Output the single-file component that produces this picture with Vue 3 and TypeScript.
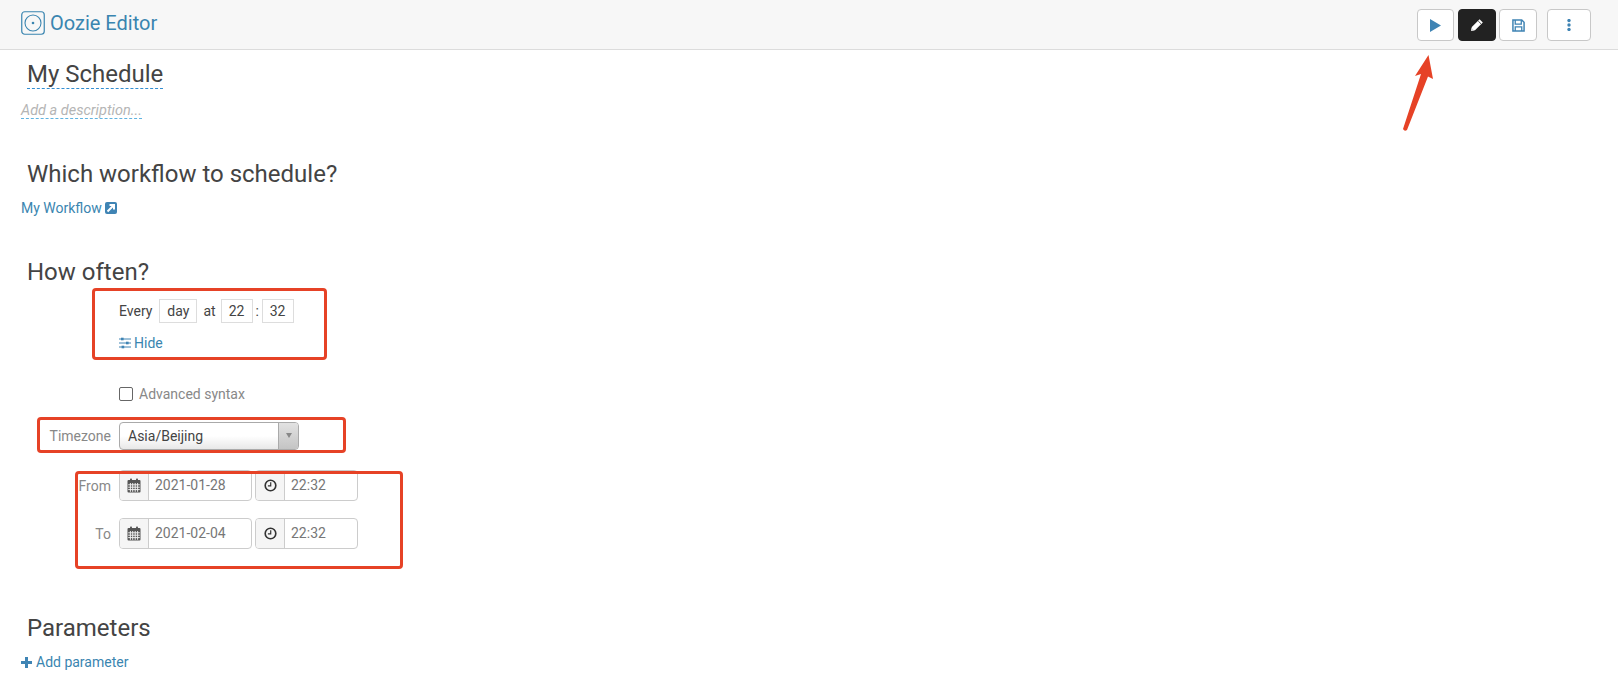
<script setup lang="ts">
const dates = [
  { label: 'From', date: '2021-01-28', time: '22:32' },
  { label: 'To', date: '2021-02-04', time: '22:32' },
]
</script>

<template>
  <div class="page">
    <header class="bar">
      <a class="brand">
        <svg class="brand-icon" viewBox="0 0 24 24" width="24" height="24">
          <rect x="0.75" y="0.75" width="22.5" height="22.5" rx="3" fill="none" stroke="#3a85b0" stroke-width="1.2" />
          <circle cx="12" cy="12" r="8" fill="none" stroke="#3a85b0" stroke-width="1.1" />
          <circle cx="12" cy="12" r="1.3" fill="#3a85b0" />
        </svg>
        <span>Oozie Editor</span>
      </a>
      <div class="actions">
        <button class="btn play">
          <svg viewBox="0 0 11 13" width="11" height="13"><path d="M0 0 L11 6.5 L0 13 Z" fill="#3f84b4" /></svg>
        </button>
        <button class="btn edit">
          <svg viewBox="0 0 14 14" width="14" height="14"><path d="M9.6 1.2 L12.8 4.4 L5 12.2 L1 13 L1.8 9 Z" fill="#fff" /><path d="M8.2 3 L11 5.8" stroke="#222" stroke-width="0.8" /><path d="M1.5 10 L4 12.5 L1 13 Z" fill="#ccc" /></svg>
        </button>
        <button class="btn save">
          <svg viewBox="0 0 14 14" width="13" height="13"><path d="M1 1 H10.5 L13 3.5 V13 H1 Z" fill="none" stroke="#3f84b4" stroke-width="1.6" /><path d="M3.5 1 V5.5 H10 V1 M3.5 13 V8.5 H10.5 V13" fill="none" stroke="#3f84b4" stroke-width="1.4" /></svg>
        </button>
        <button class="btn more">
          <svg viewBox="0 0 4 12" width="4" height="12"><circle cx="2" cy="1.6" r="1.7" fill="#3f84b4" /><circle cx="2" cy="6" r="1.7" fill="#3f84b4" /><circle cx="2" cy="10.4" r="1.7" fill="#3f84b4" /></svg>
        </button>
      </div>
    </header>

    <main class="content">
      <h2 class="heading title"><span class="editable">My Schedule</span></h2>
      <p class="description"><span>Add a description...</span></p>

      <h2 class="heading workflow-title">Which workflow to schedule?</h2>
      <a class="link workflow-link">
        My Workflow
        <svg viewBox="0 0 12 12" width="12" height="12"><rect width="12" height="12" rx="2" fill="#3f84b4" /><path d="M2.5 9.5 L8 4 M4.5 3 H9 V7.5" stroke="#fff" stroke-width="2" fill="none" /></svg>
      </a>

      <h2 class="heading often-title">How often?</h2>
      <div class="cron">
        <div class="cron-row">
          <span>Every</span>
          <span class="chip day">day</span>
          <span class="at">at</span>
          <span class="chip num">22</span>
          <span class="colon">:</span>
          <span class="chip num">32</span>
        </div>
        <a class="link hide">
          <svg viewBox="0 0 12 12" width="12" height="12">
            <path d="M0 2 H12 M0 6 H12 M0 10 H12" stroke="#3f84b4" stroke-width="1" />
            <rect x="2" y="0.7" width="2.6" height="2.6" fill="#3f84b4" />
            <rect x="7" y="4.7" width="2.6" height="2.6" fill="#3f84b4" />
            <rect x="2.6" y="8.7" width="2.6" height="2.6" fill="#3f84b4" />
          </svg>
          Hide
        </a>
      </div>

      <label class="advanced">
        <span class="checkbox"></span>
        <span>Advanced syntax</span>
      </label>

      <div class="form-row timezone">
        <span class="form-label">Timezone</span>
        <div class="select">
          <span class="select-value">Asia/Beijing</span>
          <span class="select-arrow"><i></i></span>
        </div>
      </div>

      <div v-for="d in dates" :key="d.label" class="form-row date-row">
        <span class="form-label">{{ d.label }}</span>
        <div class="input-group date">
          <span class="addon">
            <svg viewBox="0 0 14 15" width="14" height="15">
              <rect x="0.5" y="2" width="13" height="12.5" rx="1" fill="#555" />
              <rect x="3" y="0.5" width="2" height="3" rx="0.8" fill="#555" />
              <rect x="9" y="0.5" width="2" height="3" rx="0.8" fill="#555" />
              <path d="M1.2 6.8 H12.8 M1.2 9.2 H12.8 M1.2 11.6 H12.8 M3.4 5 V13.8 M5.7 5 V13.8 M8.2 5 V13.8 M10.6 5 V13.8" stroke="#eee" stroke-width="1" />
            </svg>
          </span>
          <span class="value">{{ d.date }}</span>
        </div>
        <div class="input-group time">
          <span class="addon">
            <svg viewBox="0 0 12 12" width="13" height="13">
              <circle cx="6" cy="6" r="4.9" fill="none" stroke="#333" stroke-width="1.5" />
              <path d="M6.2 3 V6.4 H3.6" fill="none" stroke="#333" stroke-width="1.1" />
            </svg>
          </span>
          <span class="value">{{ d.time }}</span>
        </div>
      </div>

      <h2 class="heading params-title">Parameters</h2>
      <a class="link add-param">
        <svg viewBox="0 0 11 11" width="11" height="11"><path d="M5.5 0 V11 M0 5.5 H11" stroke="#3f84b4" stroke-width="3" /></svg>
        Add parameter
      </a>
    </main>

    <span class="note note-cron"></span>
    <span class="note note-tz"></span>
    <span class="note note-dates"></span>
    <svg class="note-arrow" viewBox="0 0 40 84" width="40" height="84">
      <path d="M27.5 1 L32 25 L27 22.5 L6 76 Q3.5 78 2 75 L20 20 L14 22 Z" fill="#e64226" />
    </svg>
  </div>
</template>

<style>
html, body { margin: 0; background: #fff; }
</style>

<style scoped>
.page {
  position: relative;
  height: 679px;
  overflow: hidden;
  font-family: Roboto, "Liberation Sans", sans-serif;
  font-size: 14px;
  color: #444;
}
.bar {
  height: 49px;
  box-sizing: content-box;
  background: #f7f7f7;
  border-bottom: 1px solid #dcdcdc;
  display: flex;
  align-items: flex-start;
  justify-content: space-between;
}
.brand {
  display: flex;
  align-items: center;
  gap: 5px;
  margin: 11px 0 0 21px;
  height: 24px;
  font-size: 20px;
  color: #3a85b0;
}
.brand-icon { display: block; }
.actions {
  display: flex;
  margin: 9px 27px 0 0;
}
.btn {
  height: 32px;
  padding: 0;
  display: flex;
  align-items: center;
  justify-content: center;
  background: #fff;
  border: 1px solid #c8c8c8;
  border-radius: 4px;
}
.play { width: 37px; }
.edit { width: 38px; margin-left: 4px; background: #222; border-color: #222; }
.save { width: 38px; margin-left: 3px; }
.more { width: 44px; margin-left: 10px; }

.content { padding-left: 21px; }
.heading {
  margin: 0 0 0 6px;
  font-size: 24px;
  font-weight: 400;
  line-height: 30px;
  color: #444;
}
.title { padding-top: 9px; }
.editable {
  display: inline-block;
  height: 29px;
  border-bottom: 1px dashed #338ed1;
}
.description {
  margin: 14px 0 0;
  font-size: 14.5px;
  line-height: 16px;
  font-style: italic;
  color: #b5b5b5;
}
.description span { display: inline-block; height: 15px; border-bottom: 1px dashed #60b3e0; }
.workflow-title { margin-top: 40px; }
.link {
  display: flex;
  align-items: center;
  color: #3a85b0;
  line-height: 16px;
}
.workflow-link { gap: 3px; margin-top: 11px; height: 16px; }
.often-title { margin-top: 41px; }
.cron { margin-left: 98px; margin-top: 12px; }
.cron-row {
  display: flex;
  align-items: center;
  height: 24px;
  font-size: 14px;
  color: #444;
}
.chip {
  box-sizing: border-box;
  height: 24px;
  line-height: 22px;
  border: 1px solid #ddd;
  text-align: center;
}
.day { width: 38px; margin: 0 6px 0 7px; }
.num { width: 32px; }
.at { margin-right: 5px; }
.colon { width: 9px; text-align: center; }
.hide { gap: 3px; margin-top: 12px; height: 16px; }

.advanced {
  display: flex;
  align-items: center;
  gap: 6px;
  margin: 35px 0 0 98px;
  height: 16px;
  color: #888;
}
.checkbox {
  width: 12px;
  height: 12px;
  border: 1px solid #666;
  border-radius: 2px;
  background: #fff;
}
.form-row { display: flex; align-items: center; }
.form-label {
  width: 90px;
  text-align: right;
  margin-right: 8px;
  color: #888;
}
.timezone { margin-top: 19px; height: 29px; }
.select {
  box-sizing: border-box;
  width: 180px;
  height: 28px;
  display: flex;
  border: 1px solid #aaa;
  border-radius: 4px;
  background: linear-gradient(#fff, #fff 50%, #e8e8e8);
  color: #444;
}
.select-value { flex: 1; padding-left: 8px; line-height: 26px; }
.select-arrow {
  width: 19px;
  display: flex;
  align-items: center;
  justify-content: center;
  border-left: 1px solid #aaa;
  background: linear-gradient(#e2e2e2, #c4c4c4);
  border-radius: 0 3px 3px 0;
}
.select-arrow i {
  border-left: 3px solid transparent;
  border-right: 3px solid transparent;
  border-top: 5px solid #888;
}
.date-row { height: 31px; margin-top: 17px; }
.timezone + .date-row { margin-top: 20px; }
.input-group {
  box-sizing: border-box;
  height: 31px;
  display: flex;
  border: 1px solid #ccc;
  border-radius: 4px;
  background: #fff;
  color: #777;
}
.date { width: 133px; margin-right: 3px; }
.time { width: 103px; }
.addon {
  width: 28px;
  flex: none;
  display: flex;
  align-items: center;
  justify-content: center;
  background: #f5f5f5;
  border-right: 1px solid #ccc;
  border-radius: 3px 0 0 3px;
}
.value { padding-left: 6px; line-height: 29px; }
.params-title { margin-top: 64px; }
.add-param { gap: 4px; margin-top: 11px; height: 16px; }

.note {
  position: absolute;
  box-sizing: border-box;
  border: 3px solid #e64226;
  border-radius: 4px;
}
.note-cron { left: 92px; top: 288px; width: 235px; height: 72px; }
.note-tz { left: 37px; top: 417px; width: 309px; height: 36px; }
.note-dates { left: 75px; top: 471px; width: 328px; height: 98px; }
.note-arrow { position: absolute; left: 1401px; top: 54px; }
</style>
